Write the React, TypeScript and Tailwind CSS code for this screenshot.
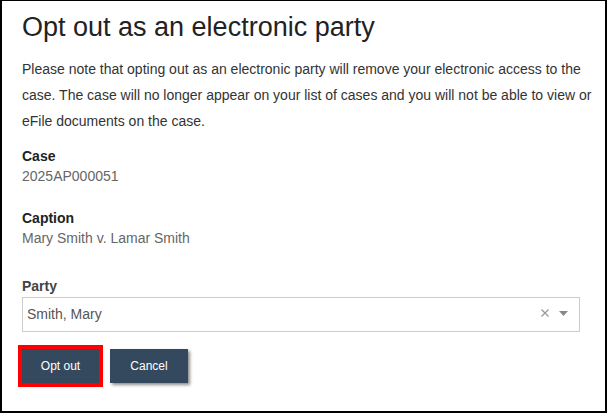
import React from 'react';

function Field({ label, value, className }: { label: string; value: string; className?: string }) {
    return (
        <div className={className}>
            <div className="text-[14px] leading-[18px] font-bold text-[#222]">{label}</div>
            <div className="mt-[2px] text-[14px] leading-[18px] text-[#666]">{value}</div>
        </div>
    );
}

export default function App() {
    return (
        <div
            className="w-[607px] h-[413px] box-border bg-white border-black border-t border-l-2 border-r-2 border-b-2 pl-[20px] pt-[8px]"
            style={{ fontFamily: '"Liberation Sans", Arial, sans-serif' }}
        >
            <h1 className="text-[27px] leading-[34px] pt-[1px] h-[35px] text-[#222] font-normal">
                Opt out as an electronic party
            </h1>

            <p className="mt-[12px] w-[572px] text-[14px] leading-[26px] text-[#333]">
                Please note that opting out as an electronic party will remove your electronic access to the
                case. The case will no longer appear on your list of cases and you will not be able to view or
                eFile documents on the case.
            </p>

            <Field className="mt-[13px]" label="Case" value="2025AP000051" />
            <Field className="mt-[24px]" label="Caption" value="Mary Smith v. Lamar Smith" />

            {/* Party select */}
            <div className="mt-[30px]">
                <div className="text-[14px] leading-[18px] font-bold text-[#444]">Party</div>
                <div className="mt-[2px] w-[558px] h-[35px] border border-[#ccc] flex items-center pl-[4px] pr-[11px]">
                    <span className="flex-1 text-[14px] text-[#555]">Smith, Mary</span>
                    <svg width="8" height="8" viewBox="0 0 8 8" className="mt-[-4px]">
                        <path d="M0.5 0.5 L7.5 7.5 M7.5 0.5 L0.5 7.5" stroke="#999" strokeWidth="1.3" />
                    </svg>
                    <svg width="9" height="5" viewBox="0 0 9 5" className="ml-[10px] mt-[-3px]">
                        <path d="M0 0 L9 0 L4.5 5 Z" fill="#888" />
                    </svg>
                </div>
            </div>

            {/* Actions */}
            <div className="mt-[17px] flex items-center gap-[11px]">
                <button className="w-[77px] h-[34px] bg-[#34495e] text-white text-[12px] outline-[4px] outline-solid outline-[#ff0000] shadow-[2px_2px_3px_rgba(0,0,0,0.45)]">
                    Opt out
                </button>
                <button className="w-[78px] h-[34px] bg-[#34495e] text-white text-[12px] shadow-[2px_2px_3px_rgba(0,0,0,0.45)]">
                    Cancel
                </button>
            </div>
        </div>
    );
}
